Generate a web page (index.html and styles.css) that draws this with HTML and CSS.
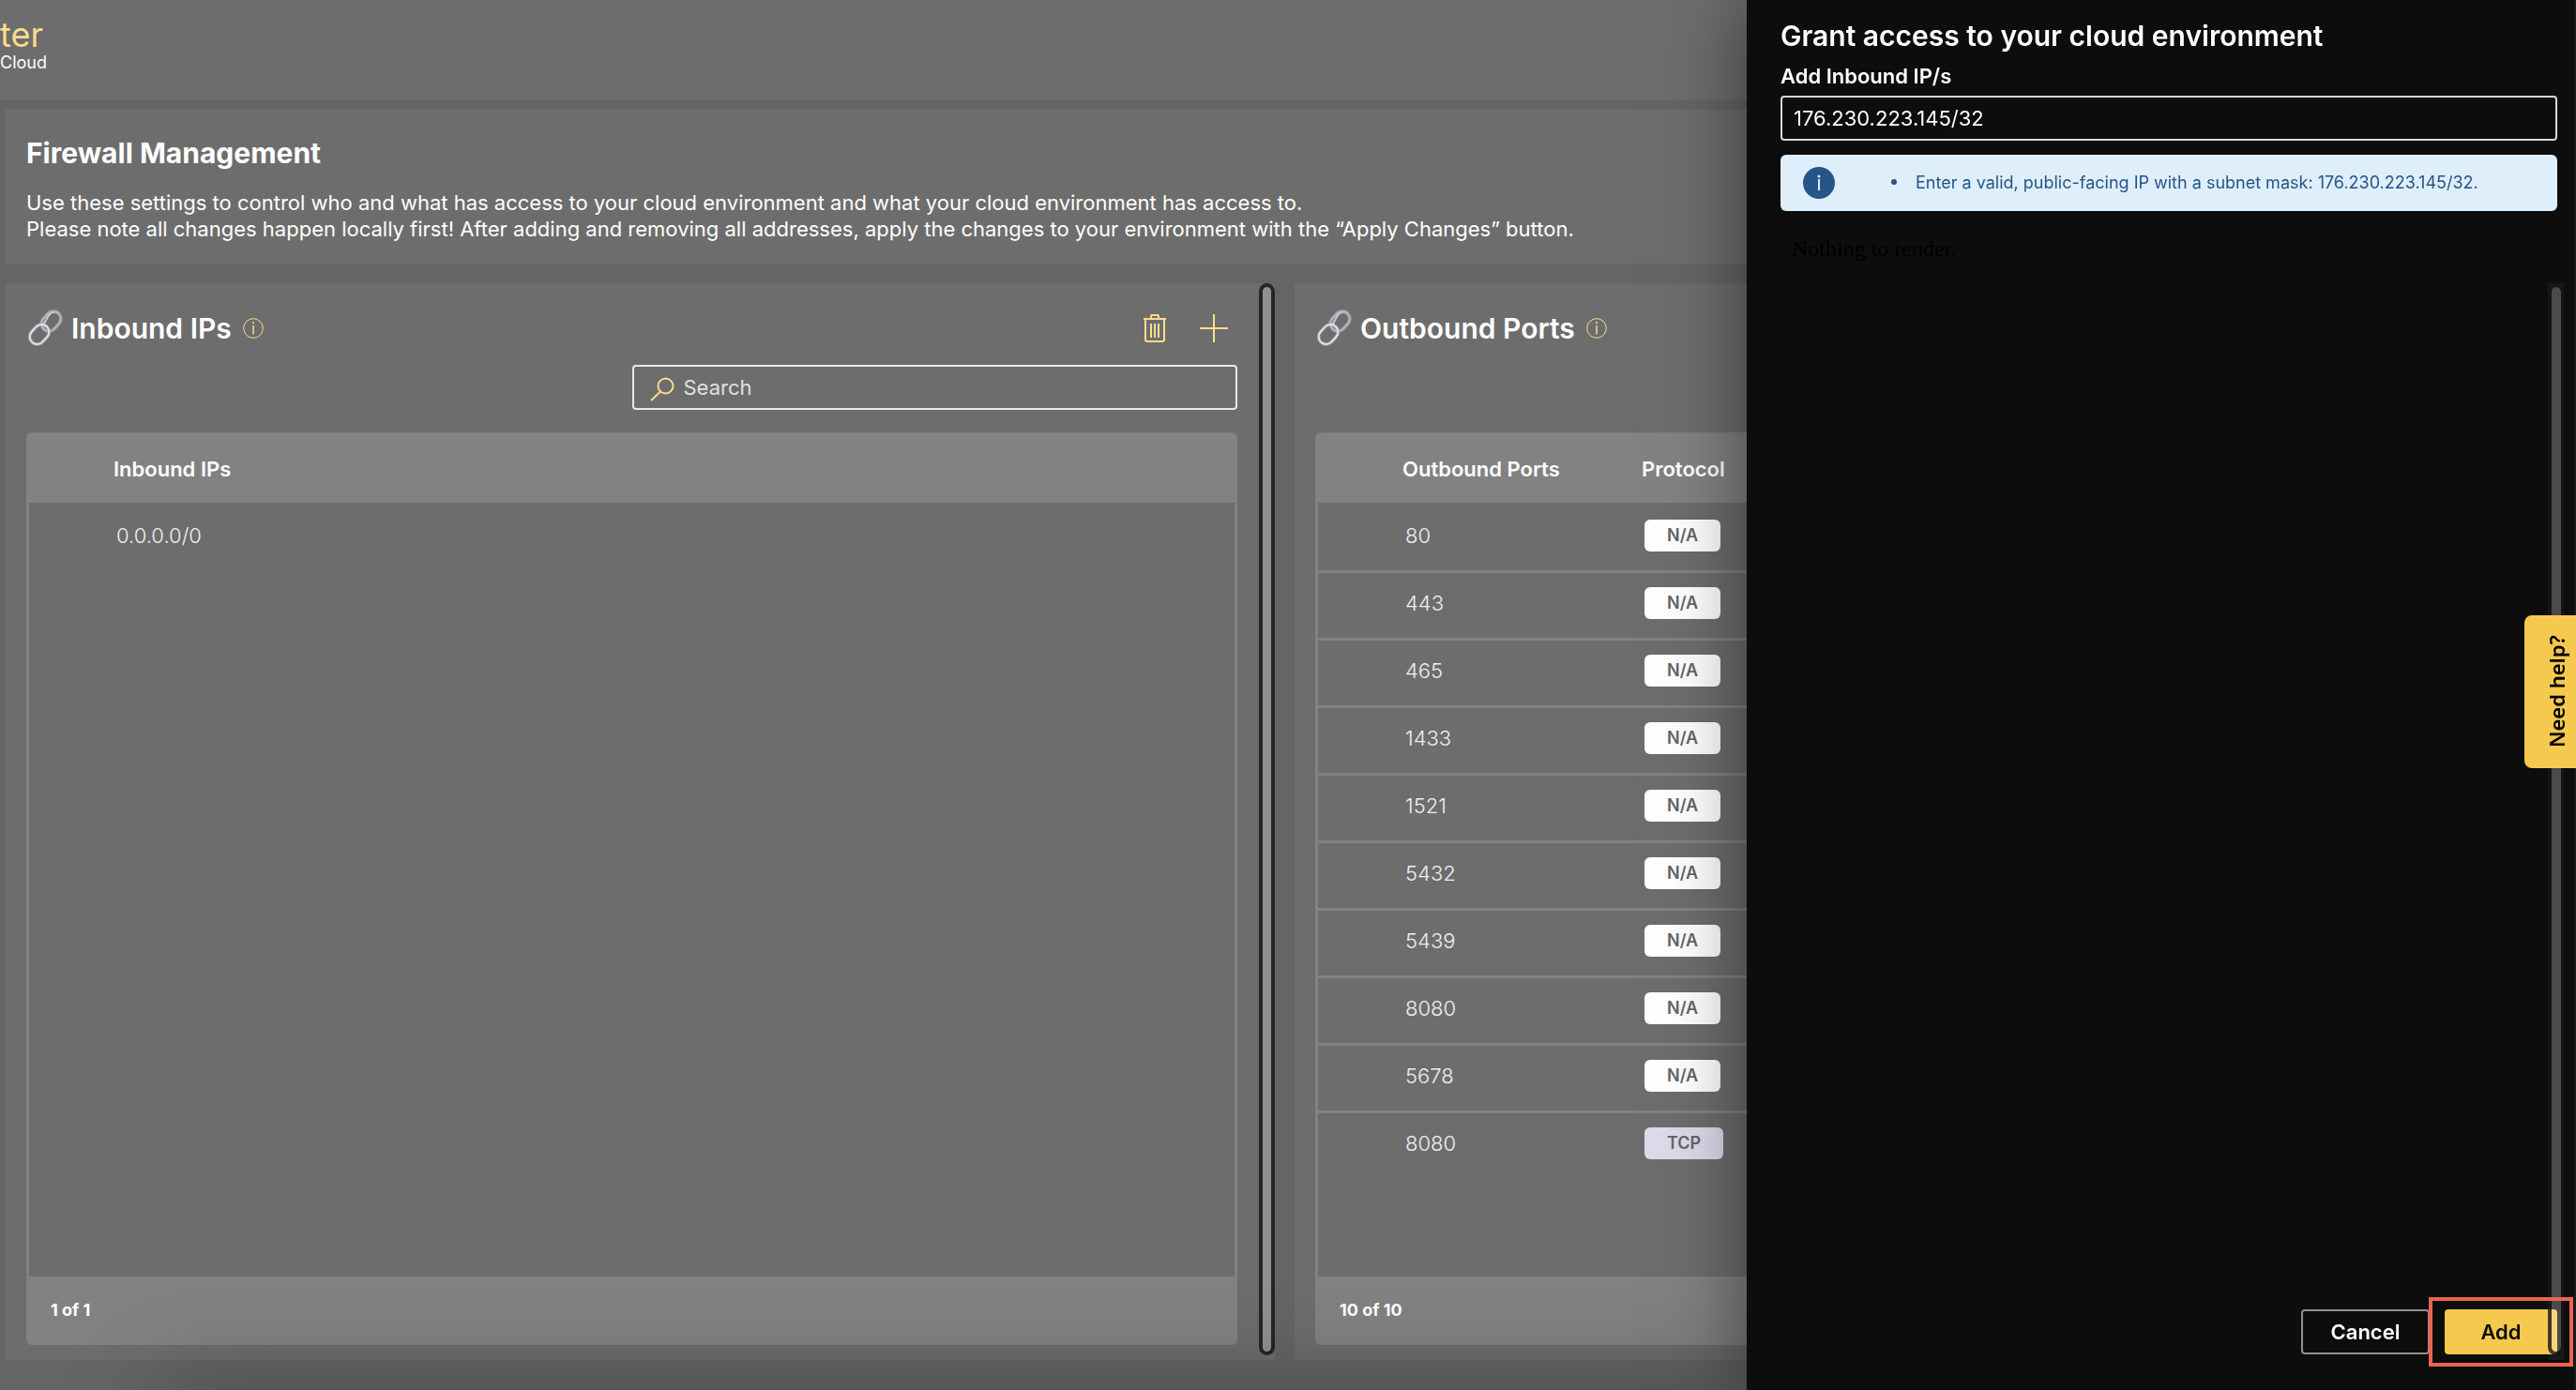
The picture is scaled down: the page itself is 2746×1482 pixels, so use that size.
FILE: index.html
```
<!DOCTYPE html>
<html lang="en">
<head>
    <meta charset="UTF-8">
    <meta name="viewport" content="width=device-width, initial-scale=1.0">
    <title>Firewall Management</title>
    <link rel="stylesheet" href="styles.css">
</head>
<body>
    <svg class="sprite" aria-hidden="true">
        <symbol id="icon-link" viewBox="0 0 40 40">
            <g fill="none">
                <g stroke="#948e8e" stroke-width="4">
                    <rect x="18.500" y="1" width="16" height="23" rx="8" transform="rotate(42 26.500 12.500)"/>
                    <rect x="6" y="15" width="16" height="23" rx="8" transform="rotate(42 14 26.500)"/>
                </g>
                <g stroke="#dbe4f0" stroke-width="2">
                    <path d="M18 17L24 6Q29 0 35 4" stroke="#c3cddb"/>
                    <rect x="18.500" y="1" width="16" height="23" rx="8" transform="rotate(42 26.500 12.500)" stroke="#b4b8c0"/>
                    <rect x="6" y="15" width="16" height="23" rx="8" transform="rotate(42 14 26.500)"/>
                </g>
            </g>
        </symbol>
        <symbol id="icon-info" viewBox="0 0 22 22">
            <circle cx="11" cy="11" r="10.300" fill="none" stroke="currentColor" stroke-width="1"/>
            <path d="M11 8v9.500" fill="none" stroke="currentColor" stroke-width="1.500"/>
            <circle cx="11" cy="5" r="1.100" fill="currentColor"/>
        </symbol>
    </svg>

    <header class="topbar">
        <div class="brand">ter</div>
        <div class="brand_sub">Cloud</div>
    </header>

    <main class="page">
        <section class="intro">
            <h1>Firewall Management</h1>
            <p>Use these settings to control who and what has access to your cloud environment and what your cloud environment has access to.<br>
            Please note all changes happen locally first! After adding and removing all addresses, apply the changes to your environment with the “Apply Changes” button.</p>
        </section>

        <div class="panels">
            <section class="panel">
                <div class="panel_head">
                    <svg class="link_icon"><use href="#icon-link"/></svg>
                    <h2>Inbound IPs</h2>
                    <svg class="info_icon"><use href="#icon-info"/></svg>
                    <div class="actions">
                        <button class="icon_btn" aria-label="Delete">
                            <svg width="26" height="32" viewBox="0 0 26 32" fill="none" stroke="currentColor" stroke-width="2">
                                <path d="M1 6h24M9 6V3q0-1 1-1h6q1 0 1 1v3M3 7v21q0 2 2 2h16q2 0 2-2V7"/>
                                <path d="M9 11v15M13 11v15M17 11v15"/>
                            </svg>
                        </button>
                        <button class="icon_btn" aria-label="Add">
                            <svg width="30" height="30" viewBox="0 0 30 30" fill="none" stroke="currentColor" stroke-width="2">
                                <path d="M15 0v30M0 15h30"/>
                            </svg>
                        </button>
                    </div>
                </div>
                <div class="search_row">
                    <div class="search">
                        <svg width="26" height="26" viewBox="0 0 26 26" fill="none" stroke="currentColor" stroke-width="2">
                            <circle cx="16.500" cy="9.500" r="8"/>
                            <path d="M11 15.500L1 25"/>
                        </svg>
                        <input type="text" placeholder="Search" aria-label="Search inbound IPs">
                    </div>
                </div>
                <div class="grid">
                    <div class="grid_body">
                        <table>
                            <thead>
                                <tr><th>Inbound IPs</th></tr>
                            </thead>
                            <tbody>
                                <tr><td>0.0.0.0/0</td></tr>
                            </tbody>
                        </table>
                    </div>
                    <div class="grid_foot">1 of 1</div>
                </div>
                <div class="scrollbar"></div>
            </section>

            <section class="panel">
                <div class="panel_head">
                    <svg class="link_icon"><use href="#icon-link"/></svg>
                    <h2>Outbound Ports</h2>
                    <svg class="info_icon"><use href="#icon-info"/></svg>
                </div>
                <div class="search_row"></div>
                <div class="grid">
                    <div class="grid_body">
                        <table>
                            <thead>
                                <tr><th class="col_port">Outbound Ports</th><th>Protocol</th></tr>
                            </thead>
                            <tbody>
                                <tr><td>80</td><td><span class="tag">N/A</span></td></tr>
                                <tr><td>443</td><td><span class="tag">N/A</span></td></tr>
                                <tr><td>465</td><td><span class="tag">N/A</span></td></tr>
                                <tr><td>1433</td><td><span class="tag">N/A</span></td></tr>
                                <tr><td>1521</td><td><span class="tag">N/A</span></td></tr>
                                <tr><td>5432</td><td><span class="tag">N/A</span></td></tr>
                                <tr><td>5439</td><td><span class="tag">N/A</span></td></tr>
                                <tr><td>8080</td><td><span class="tag">N/A</span></td></tr>
                                <tr><td>5678</td><td><span class="tag">N/A</span></td></tr>
                                <tr><td>8080</td><td><span class="tag tag_tcp">TCP</span></td></tr>
                            </tbody>
                        </table>
                    </div>
                    <div class="grid_foot">10 of 10</div>
                </div>
            </section>
        </div>
    </main>

    <div class="bottom_shade"></div>

    <aside class="drawer">
        <h2>Grant access to your cloud environment</h2>
        <label for="inbound_ip">Add Inbound IP/s</label>
        <input type="text" id="inbound_ip" value="176.230.223.145/32">
        <div class="hint">
            <svg width="34" height="34" viewBox="0 0 34 34">
                <circle cx="17" cy="17" r="17" fill="#275587"/>
                <circle cx="17" cy="10" r="1.500" fill="#deeefb"/>
                <path d="M17 13v12" stroke="#deeefb" stroke-width="2"/>
            </svg>
            <ul>
                <li>Enter a valid, public-facing IP with a subnet mask: 176.230.223.145/32.</li>
            </ul>
        </div>
        <p class="empty">Nothing to render.</p>
        <div class="drawer_foot">
            <button class="btn btn_cancel">Cancel</button>
            <button class="btn btn_add">Add</button>
        </div>
        <div class="drawer_scroll"></div>
        <div class="marker"></div>
    </aside>

    <button class="help">Need help?</button>
</body>
</html>
```
FILE: styles.css
```
* {
    box-sizing: border-box;
}

body {
    margin: 0;
    height: 100vh;
    overflow: hidden;
    display: flex;
    flex-direction: column;
    background: #656565;
    color: white;
    font-family: Inter, sans-serif;
    font-size: 22px;
}

h1, h2, p, ul {
    margin: 0;
}

button, input {
    font-family: inherit;
}

.sprite {
    position: absolute;
    width: 0;
    height: 0;
}

.topbar {
    height: 106px;
    padding-top: 17px;
    background: #6d6d6d;
}

.brand {
    font-size: 36px;
    line-height: 40px;
    color: #fbdc8c;
}

.brand_sub {
    font-size: 18px;
    line-height: 20px;
}

.page {
    flex: 1;
    display: flex;
    flex-direction: column;
    padding: 11px 13px 32px 6px;
}

.intro {
    height: 164px;
    padding: 28px 22px;
    background: #6d6d6d;
}

.intro h1 {
    font-size: 30px;
    line-height: 36px;
    font-weight: 700;
    margin-bottom: 21px;
}

.intro p {
    line-height: 28px;
}

.panels {
    flex: 1;
    display: grid;
    grid-template-columns: 1fr 1fr;
    gap: 21px;
    margin-top: 21px;
}

.panel {
    position: relative;
    display: flex;
    flex-direction: column;
    padding: 24px 40px 16px 22px;
    background: #6d6d6d;
}

.panel_head {
    height: 48px;
    display: flex;
    align-items: center;
    color: #fbdc8c;
}

.panel_head h2 {
    font-size: 30px;
    font-weight: 600;
    color: white;
}

.link_icon {
    width: 40px;
    height: 40px;
    margin-right: 8px;
}

.info_icon {
    width: 22px;
    height: 22px;
    margin-left: 12px;
}

.actions {
    display: flex;
    gap: 35px;
    margin-left: auto;
    padding-right: 10px;
}

.icon_btn {
    padding: 0;
    border: 0;
    background: none;
    color: #fbdc8c;
    display: flex;
    align-items: center;
}

.search_row {
    height: 63px;
    margin-bottom: 24px;
    padding-top: 15px;
    display: flex;
    justify-content: flex-end;
}

.search {
    width: 50%;
    display: flex;
    align-items: center;
    padding-left: 17px;
    border: 2px solid #e8e8e8;
    border-radius: 4px;
    color: #fbdc8c;
}

.search svg {
    margin-top: 4px;
}

.search input {
    flex: 1;
    margin-left: 10px;
    padding: 0;
    border: 0;
    outline: 0;
    background: none;
    color: white;
    font-size: 22px;
}

.search input::placeholder {
    color: #e0e0e0;
}

.grid {
    flex: 1;
    display: flex;
    flex-direction: column;
    border-radius: 6px;
    overflow: hidden;
}

.grid_body {
    flex: 1;
    border: 3px solid #828282;
    border-top: 0;
}

table {
    width: 100%;
    border-collapse: collapse;
    table-layout: fixed;
}

th {
    height: 75px;
    padding: 2px 0 0 90px;
    background: #828282;
    text-align: left;
    font-size: 22px;
    font-weight: 600;
}

td {
    height: 72px;
    padding: 0 0 2px 93px;
    color: #f0f0f0;
    font-weight: 300;
}

tr + tr td {
    box-shadow: inset 0 3px #828282;
}

.col_port {
    width: 345px;
}

th + th {
    padding-left: 0;
}

td + td {
    padding-left: 3px;
}

.tag {
    display: inline-block;
    padding: 0 24px;
    border-radius: 6px;
    background: white;
    color: #656565;
    font-size: 18px;
    line-height: 34px;
    font-weight: 600;
    vertical-align: middle;
}

.tag_tcp {
    background: #dddaea;
}

.grid_foot {
    height: 70px;
    padding-left: 26px;
    background: #828282;
    font-size: 18px;
    line-height: 66px;
    font-weight: 700;
}

.scrollbar {
    position: absolute;
    top: 0;
    right: 0;
    bottom: 5px;
    width: 17px;
    border: 4px solid #262626;
    border-radius: 9px;
    background: #909090;
}

/* soft shade along the bottom edge of the window */
.bottom_shade {
    position: fixed;
    left: 170px;
    right: 0;
    top: 100%;
    height: 100px;
    box-shadow: 0 0 110px rgba(0, 0, 0, 0.3);
}

.drawer {
    position: fixed;
    top: 0;
    right: 0;
    bottom: 0;
    width: 884px;
    padding: 18px 18px 38px 36px;
    display: flex;
    flex-direction: column;
    background: #0d0d0d;
    border-right: 2px solid #1a1a1a;
    box-shadow: 0 0 80px rgba(0, 0, 0, 0.5);
}

.drawer h2 {
    font-size: 30px;
    line-height: 40px;
    font-weight: 600;
}

.drawer label {
    margin: 10px 0 7px;
    font-size: 22px;
    line-height: 27px;
    font-weight: 600;
}

.drawer input {
    height: 48px;
    padding: 0 12px;
    border: 2px solid #d8d8d8;
    border-radius: 4px;
    background: #0d0d0d;
    color: white;
    font-size: 22px;
}

.hint {
    height: 60px;
    margin-top: 15px;
    padding-left: 24px;
    display: flex;
    align-items: center;
    border-radius: 6px;
    background: #deeefb;
    color: #275587;
    font-size: 18px;
}

.hint ul {
    margin-left: 60px;
    padding: 0 0 2px;
    list-style: none;
}

.hint li {
    display: flex;
    align-items: center;
    gap: 20px;
}

.hint li::before {
    content: "";
    width: 6px;
    height: 6px;
    border-radius: 50%;
    background: #275587;
}

.empty {
    margin: 26px 12px;
    color: black;
    font-family: "Liberation Serif", serif;
    font-size: 24px;
    line-height: 28px;
}

.drawer_foot {
    display: flex;
    justify-content: flex-end;
    gap: 16px;
    margin-top: auto;
}

.btn {
    height: 48px;
    border: 0;
    border-radius: 4px;
    font-size: 22px;
    font-weight: 600;
}

.btn_cancel {
    width: 137px;
    border: 2px solid #909090;
    background: none;
    color: white;
}

.btn_add {
    width: 120px;
    background: #f5c94d;
    color: #0d0d0d;
}

.drawer_scroll {
    position: absolute;
    top: 302px;
    right: 11px;
    bottom: 32px;
    width: 17px;
    background: rgba(255, 255, 255, 0.05);
}

.drawer_scroll::before {
    content: "";
    position: absolute;
    inset: 0 0 5px;
    border: 4px solid rgba(20, 20, 20, 0.8);
    border-right-width: 3px;
    border-radius: 9px;
    background: rgba(255, 255, 255, 0.22);
    background-clip: padding-box;
}

.marker {
    position: absolute;
    right: 1px;
    bottom: 25px;
    width: 154px;
    height: 74px;
    border: 4px solid #ed6350;
}

.help {
    position: fixed;
    right: 0;
    top: 656px;
    width: 55px;
    height: 163px;
    padding: 0 14px 0 0;
    border: 0;
    border-radius: 0 8px 8px 0;
    background: #f5c94d;
    color: black;
    font-family: "Noto Sans", sans-serif;
    font-size: 22px;
    font-weight: 600;
    writing-mode: vertical-rl;
    transform: rotate(180deg);
}
```
